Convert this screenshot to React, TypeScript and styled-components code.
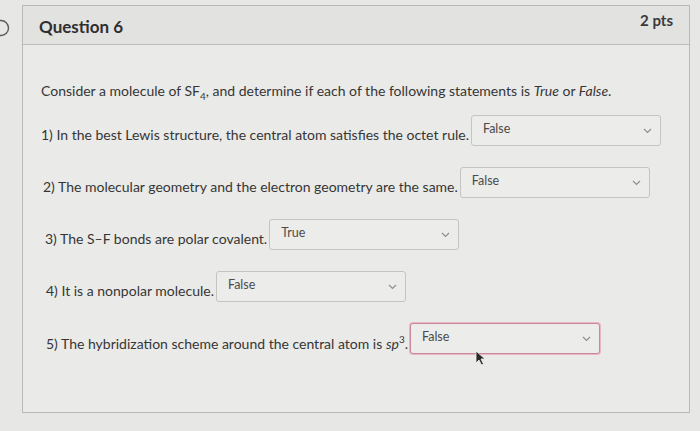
import React from 'react';
import styled, { createGlobalStyle } from 'styled-components';

const GlobalStyle = createGlobalStyle`
  html, body {
    margin: 0;
    padding: 0;
    background: #e7e7e5;
    font-family: Lato, "Open Sans", sans-serif;
    color: #363636;
  }
`;

const Page = styled.div`
  position: relative;
  width: 700px;
  height: 431px;
  overflow: hidden;
  padding: 5px 10px 0 22px;
  box-sizing: border-box;
`;

const FlagMark = styled.svg`
  position: absolute;
  left: -9px;
  top: 18px;
`;

const Card = styled.div`
  height: 408px;
  border: 1px solid #b9b9b7;
  background: #eaeae8;
  box-sizing: border-box;
  display: flex;
  flex-direction: column;
`;

const Header = styled.div`
  height: 39px;
  background: #e2e2e0;
  border-bottom: 1px solid #bdbdbb;
  display: flex;
  align-items: center;
  justify-content: space-between;
  padding: 0 16px 0 16px;
  box-sizing: border-box;
`;

const Title = styled.h2`
  margin: 0;
  font-size: 17px;
  font-weight: 700;
  color: #2f2f2f;
  transform: translateY(1px);
`;

const Points = styled.span`
  font-size: 15px;
  font-weight: 700;
  color: #3a3a3a;
  transform: translateY(-5px);
`;

const Body = styled.div`
  display: flex;
  flex-direction: column;
  padding: 37px 0 0 18px;
`;

const Intro = styled.p`
  margin: 0;
  font-size: 14px;
  line-height: 18px;
`;

const Row = styled.div<{ $indent: number }>`
  display: flex;
  align-items: center;
  height: 52px;
  padding-left: ${(p) => p.$indent}px;
`;

const Label = styled.span`
  font-size: 14px;
  margin-right: 2px;
  white-space: nowrap;
  transform: translateY(4px);
`;

const Select = styled.div<{ $invalid?: boolean }>`
  width: 190px;
  height: 31px;
  box-sizing: border-box;
  border: 1px solid ${(p) => (p.$invalid ? '#c9899b' : '#c4c4c2')};
  box-shadow: ${(p) => (p.$invalid ? '0 0 0 1px #e7b7c4' : 'none')};
  border-radius: 3px;
  background: #ececea;
  display: flex;
  align-items: center;
  justify-content: space-between;
  padding: 0 8px 0 11px;
`;

const Value = styled.span`
  font-size: 12.5px;
  color: #4b4b4b;
  transform: translateY(-2px);
`;

const Chevron = styled.svg`
  flex: none;
`;

const Cursor = styled.svg`
  position: absolute;
  left: 475px;
  top: 350px;
`;

const statements = [
  { text: '1) In the best Lewis structure, the central atom satisfies the octet rule.', value: 'False', indent: 0 },
  { text: '2) The molecular geometry and the electron geometry are the same.', value: 'False', indent: 2 },
  { text: '3) The S\u2013F bonds are polar covalent.', value: 'True', indent: 4 },
  { text: '4) It is a nonpolar molecule.', value: 'False', indent: 5 },
];

const ChevronIcon = () => (
  <Chevron width="9" height="6" viewBox="0 0 9 6">
    <path d="M1 1l3.5 3.5L8 1" fill="none" stroke="#8f8f8f" strokeWidth="1.2" />
  </Chevron>
);

const App: React.FC = () => (
  <>
    <GlobalStyle />
    <Page>
      <FlagMark width="20" height="20" viewBox="0 0 20 20">
        <circle cx="10" cy="10" r="7.5" fill="none" stroke="#5a5a5a" strokeWidth="1.4" />
      </FlagMark>
      <Card>
        <Header>
          <Title>Question 6</Title>
          <Points>2 pts</Points>
        </Header>
        <Body>
          <Intro>
            Consider a molecule of SF<sub style={{ fontSize: '10px' }}>4</sub>, and determine if each of the following
            statements is <i>True</i> or <i>False</i>.
          </Intro>
          {statements.map((s) => (
            <Row key={s.text} $indent={s.indent}>
              <Label>{s.text}</Label>
              <Select>
                <Value>{s.value}</Value>
                <ChevronIcon />
              </Select>
            </Row>
          ))}
          <Row $indent={5}>
            <Label>
              5) The hybridization scheme around the central atom is <i>sp</i>
              <sup style={{ fontSize: '10px' }}>3</sup>.
            </Label>
            <Select $invalid>
              <Value>False</Value>
              <ChevronIcon />
            </Select>
          </Row>
        </Body>
      </Card>
      <Cursor width="12" height="16" viewBox="0 0 12 16">
        <path d="M1 1v12l3-3 2.5 5 2-1-2.5-5H10z" fill="#2a2a2a" stroke="#f2f2f2" strokeWidth="0.8" />
      </Cursor>
    </Page>
  </>
);

export default App;
